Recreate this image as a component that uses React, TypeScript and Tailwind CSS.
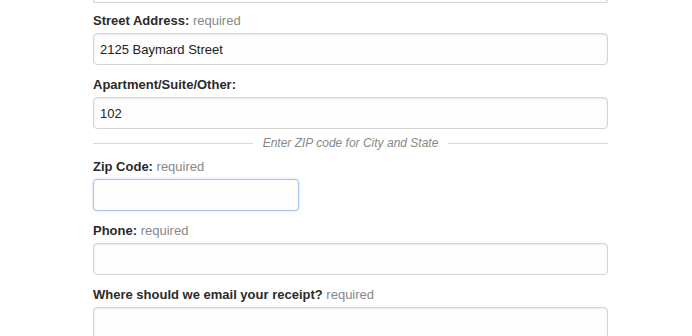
const font = { fontFamily: '"Liberation Sans", Arial, sans-serif' }

type FieldProps = {
  label: string
  required?: boolean
  value?: string
  narrow?: boolean
  focused?: boolean
  className?: string
}

const Field = ({ label, required, value, narrow, focused, className }: FieldProps) => {
  return (
    <div className={className}>
      <label className="block h-[19px] pt-[1px] mb-[3px] text-[13px] leading-[18px] text-[#2b2b2b]">
        <span className="font-bold">{label}</span>
        {required && <span className="text-[#888]"> required</span>}
      </label>
      <input
        readOnly
        value={value ?? ''}
        style={font}
        className={
          (narrow ? 'w-[206px] ' : 'w-full ') +
          (focused
            ? 'border-[#a8c6ea] shadow-[0_0_3px_rgba(120,170,230,0.45)] '
            : 'border-[#d4d4d4] shadow-[inset_0_1px_2px_rgba(0,0,0,0.08)] ') +
          'block h-[32px] px-[6px] bg-[#fdfdfd] border rounded-[4px] text-[13px] text-[#222] outline-none'
        }
      />
    </div>
  )
}

export default function App() {
  return (
    <div className="w-[692px] h-[336px] overflow-hidden bg-white" style={font}>
      <div className="ml-[93px] w-[515px]">
        <div className="h-[3px] mb-[8px] border-x border-b border-[#d4d4d4] rounded-b-[4px] bg-[#fdfdfd]" />
        <Field label="Street Address:" required value="2125 Baymard Street" className="mb-[10px]" />
        <Field label="Apartment/Suite/Other:" value="102" className="mb-[5px]" />
        <div className="flex items-center gap-[10px] h-[18px] mb-[5px]">
          <div className="flex-1 h-px bg-[#d9d9d9]" />
          <span className="text-[12px] italic text-[#888]">Enter ZIP code for City and State</span>
          <div className="flex-1 h-px bg-[#d9d9d9]" />
        </div>
        <Field label="Zip Code:" required narrow focused className="mb-[10px]" />
        <Field label="Phone:" required className="mb-[10px]" />
        <Field label="Where should we email your receipt?" required />
      </div>
    </div>
  )
}
